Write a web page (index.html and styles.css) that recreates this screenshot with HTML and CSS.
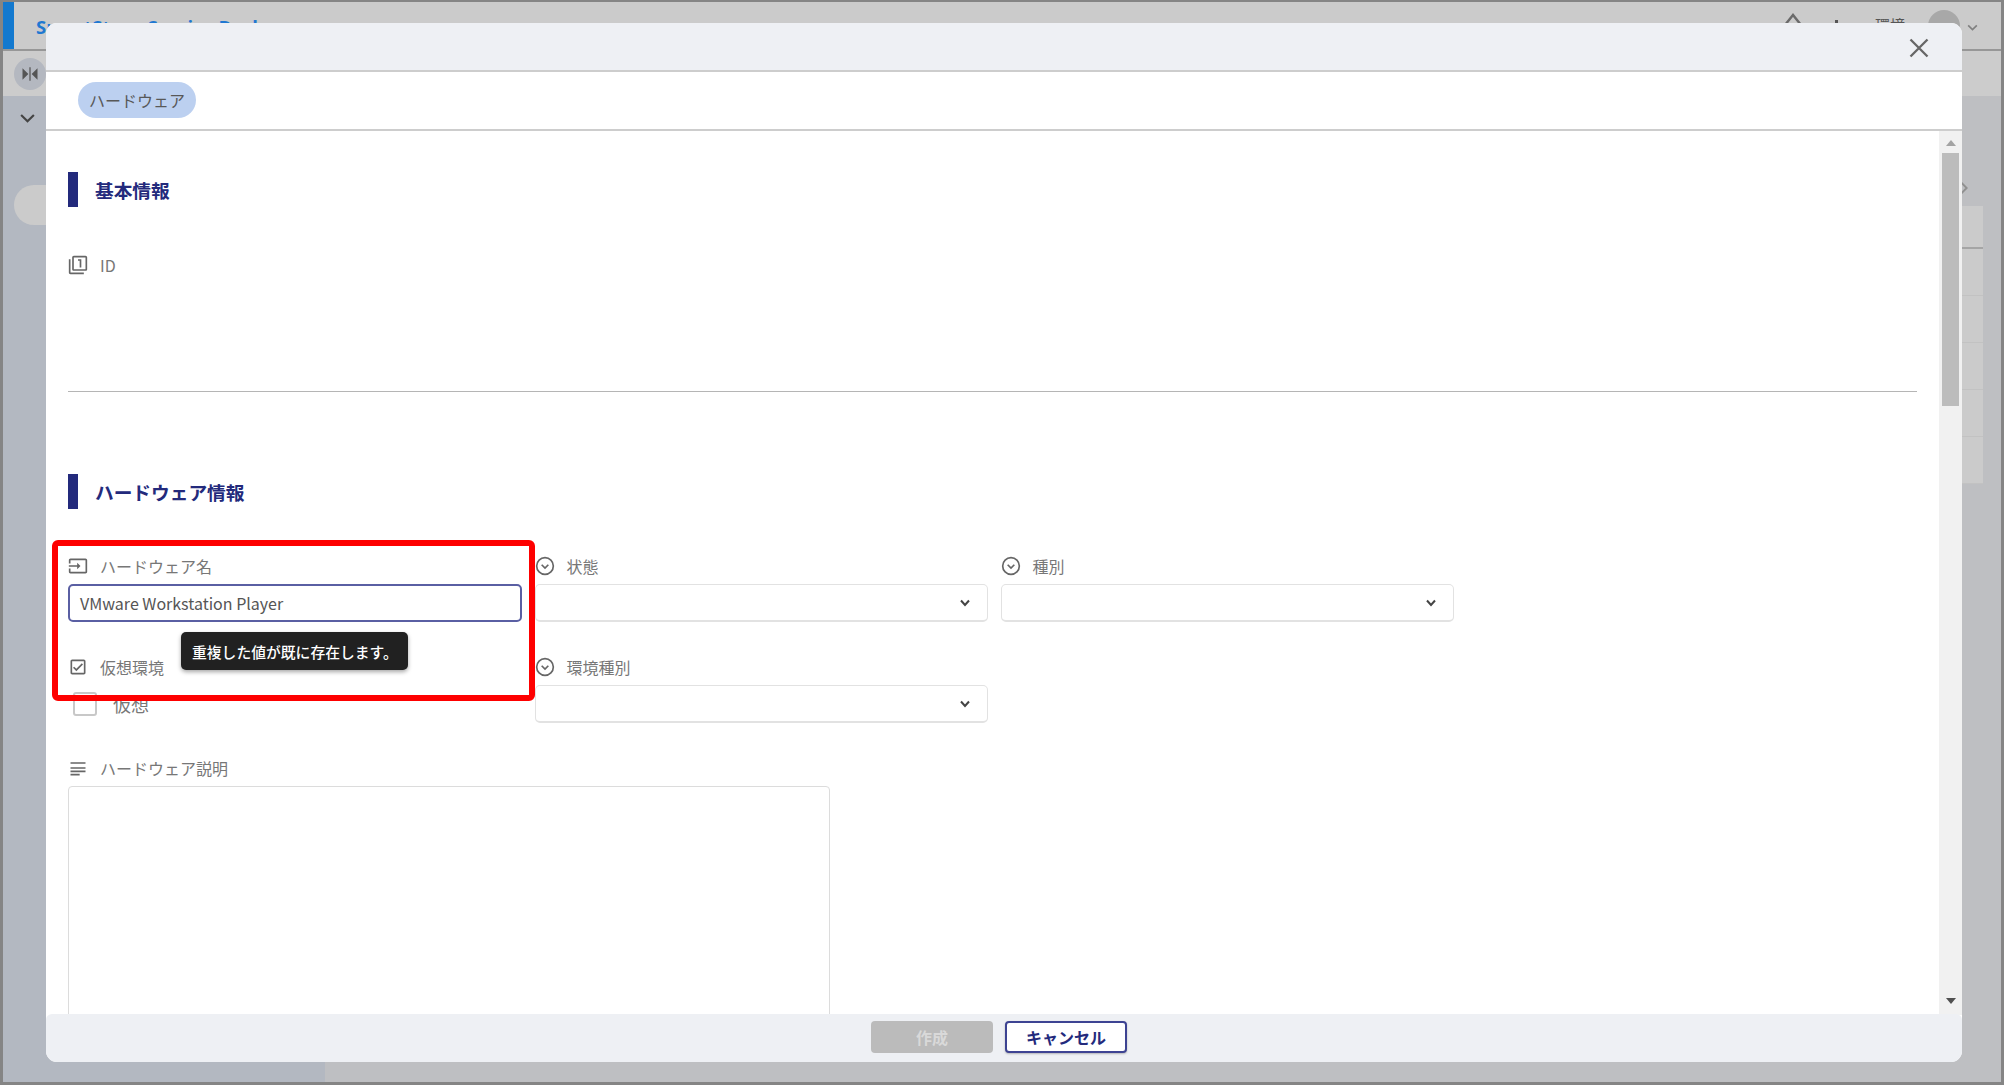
FILE: index.html
```html
<!DOCTYPE html>
<html lang="ja">
<head>
<meta charset="utf-8">
<title>ハードウェア</title>
<link rel="stylesheet" href="styles.css">
</head>
<body>
<div class="app">
  <header class="topbar">
    <div class="brand-mark"></div>
    <div class="brand">SmartStage Service Desk</div>
    <div class="top-actions">
      <svg class="top-home" viewBox="0 0 24 24"><path d="M4 13 12 3l8 10v8H4z" fill="none" stroke="#6a6a6a" stroke-width="2.4"/></svg>
      <span class="top-dot"></span>
      <span class="top-env">環境</span>
      <span class="avatar"></span>
      <svg class="top-chev" viewBox="0 0 24 24"><path d="M4 8l8 8 8-8" fill="none" stroke="#808080" stroke-width="3"/></svg>
    </div>
  </header>
  <div class="subbar">
    <span class="collapse">
      <svg viewBox="0 0 24 24"><path d="M3 5l7 7-7 7zM21 5l-7 7 7 7z" fill="#555"/><path d="M12 4v16" stroke="#555" stroke-width="1.5"/></svg>
    </span>
  </div>
  <div class="workspace">
    <aside class="sidebar">
      <svg class="side-chev" viewBox="0 0 24 24"><path d="M3 7l9 9 9-9" fill="none" stroke="#444" stroke-width="3"/></svg>
      <div class="side-pill"></div>
    </aside>
    <main class="backdrop">
      <svg class="back-arrow" viewBox="0 0 12 20"><path d="M2 2l8 8-8 8" fill="none" stroke="#909090" stroke-width="3"/></svg>
      <div class="back-table">
        <div class="back-row back-head"></div>
        <div class="back-row"></div>
        <div class="back-row"></div>
        <div class="back-row"></div>
        <div class="back-row"></div>
        <div class="back-row"></div>
      </div>
    </main>
  </div>
</div>

<section class="modal">
  <div class="modal-head">
    <svg class="close" viewBox="0 0 20 20"><path d="M1.5 1.5l17 17M18.500 1.500l-17 17" stroke="#666" stroke-width="2.300" fill="none"/></svg>
  </div>
  <div class="modal-tabs"><span class="pill">ハードウェア</span></div>
  <div class="modal-body">
    <div class="content">
      <h2 class="section-title section-first">基本情報</h2>
      <div class="label label-id">
        <svg class="ico" viewBox="0 0 24 24"><path d="M3 5H1v16c0 1.100.9 2 2 2h16v-2H3V5zm11 10h2V5h-4v2h2v8zm7-14H7c-1.100 0-2 .9-2 2v14c0 1.100.9 2 2 2h14c1.100 0 2-.9 2-2V3c0-1.100-.9-2-2-2zm0 16H7V3h14v14z"/></svg>
        <span>ID</span>
      </div>
      <hr class="divider">
      <h2 class="section-title">ハードウェア情報</h2>
      <div class="fields">
        <div class="field">
          <div class="label">
            <svg class="ico" viewBox="0 0 24 24"><path d="M21 3.010H3c-1.100 0-2 .9-2 2V9h2V4.990h18v14.030H3V15H1v4.010c0 1.100.9 1.980 2 1.980h18c1.100 0 2-.88 2-1.980v-14c0-1.110-.9-2-2-2zM11 16l4-4-4-4v3H1v2h10v3z"/></svg>
            <span>ハードウェア名</span>
          </div>
          <div class="input">VMware Workstation Player</div>
        </div>
        <div class="field">
          <div class="label">
            <svg class="ico" viewBox="0 0 24 24"><circle cx="12" cy="12" r="10" fill="none" stroke="#666" stroke-width="2"/><path d="M8 10.500l4 4 4-4" fill="none" stroke="#666" stroke-width="2"/></svg>
            <span>状態</span>
          </div>
          <div class="select"><svg class="sel-chev" viewBox="0 0 12 12"><path d="M2 3.500l4 4.500 4-4.500" fill="none" stroke="#444" stroke-width="2"/></svg></div>
        </div>
        <div class="field">
          <div class="label">
            <svg class="ico" viewBox="0 0 24 24"><circle cx="12" cy="12" r="10" fill="none" stroke="#666" stroke-width="2"/><path d="M8 10.500l4 4 4-4" fill="none" stroke="#666" stroke-width="2"/></svg>
            <span>種別</span>
          </div>
          <div class="select"><svg class="sel-chev" viewBox="0 0 12 12"><path d="M2 3.500l4 4.500 4-4.500" fill="none" stroke="#444" stroke-width="2"/></svg></div>
        </div>
        <div class="field">
          <div class="label">
            <svg class="ico" viewBox="0 0 24 24"><path d="M19 5v14H5V5h14m0-2H5c-1.100 0-2 .9-2 2v14c0 1.100.9 2 2 2h14c1.100 0 2-.9 2-2V5c0-1.100-.9-2-2-2z"/><path d="M10 17l-4-4 1.410-1.410L10 14.170l6.590-6.590L18 9l-8 8z"/></svg>
            <span>仮想環境</span>
          </div>
          <label class="check"><span class="box"></span><span>仮想</span></label>
        </div>
        <div class="field">
          <div class="label">
            <svg class="ico" viewBox="0 0 24 24"><circle cx="12" cy="12" r="10" fill="none" stroke="#666" stroke-width="2"/><path d="M8 10.500l4 4 4-4" fill="none" stroke="#666" stroke-width="2"/></svg>
            <span>環境種別</span>
          </div>
          <div class="select"><svg class="sel-chev" viewBox="0 0 12 12"><path d="M2 3.500l4 4.500 4-4.500" fill="none" stroke="#444" stroke-width="2"/></svg></div>
        </div>
      </div>
      <div class="field field-desc">
        <div class="label">
          <svg class="ico" viewBox="0 0 24 24"><path d="M14 19H3v2h11v-2zm7-8H3v2h18v-2zM3 17h18v-2H3v2zM3 5v2h18V5H3z"/></svg>
          <span>ハードウェア説明</span>
        </div>
        <div class="textarea"></div>
      </div>
    </div>
    <div class="scrollbar">
      <svg class="sb-up" viewBox="0 0 10 6"><path d="M5 0l5 6H0z" fill="#a3a3a3"/></svg>
      <div class="sb-thumb"></div>
      <svg class="sb-down" viewBox="0 0 10 6"><path d="M0 0h10L5 6z" fill="#505050"/></svg>
    </div>
  </div>
  <div class="modal-foot">
    <button class="btn btn-off">作成</button>
    <button class="btn btn-line">キャンセル</button>
  </div>
</section>

<div class="tooltip">重複した値が既に存在します。</div>
<div class="callout"></div>
</body>
</html>
```

FILE: styles.css
```css
* { box-sizing: border-box; }
html, body { margin: 0; padding: 0; height: 100%; overflow: hidden; }
body {
  font-family: "Noto Sans CJK JP", "Noto Sans", sans-serif;
  background: #bebfc2;
  color: #666;
}
.app {
  width: 2004px;
  height: 1085px;
  display: flex;
  flex-direction: column;
  border: 3px solid #858585;
  border-top-width: 2px;
}

/* dimmed page behind the dialog */
.topbar {
  height: 49px;
  flex: none;
  background: #cbcbcb;
  border-bottom: 2px solid #979797;
  display: flex;
  align-items: flex-start;
}
.brand-mark { width: 11px; height: 47px; background: #1379cf; }
.brand {
  margin-left: 22px;
  margin-top: 12px;
  font: 700 18.500px/26px "Open Sans", sans-serif;
  color: #1f78d1;
}
.top-actions { margin-left: auto; display: flex; align-items: flex-start; }
.top-home { width: 24px; height: 24px; margin-top: 10px; }
.top-dot { width: 3px; height: 14px; background: #555; margin: 18px 0 0 30px; }
.top-env { font-size: 15px; line-height: 20px; color: #555; margin: 13px 0 0 37px; }
.avatar { width: 32px; height: 32px; border-radius: 50%; background: #a8a8a8; margin: 8px 0 0 23px; }
.top-chev { width: 13px; height: 13px; margin: 19px 22px 0 6px; }

.subbar { height: 45px; flex: none; background: #cccccc; padding: 7px 0 0 11px; }
.collapse {
  width: 32px; height: 32px; border-radius: 50%;
  background: #b4b8c0;
  display: flex; align-items: center; justify-content: center;
}
.collapse svg { width: 20px; height: 20px; }

.workspace { flex: 1; display: flex; min-height: 0; }
.sidebar { width: 322px; flex: none; background: #b3b8c1; padding: 14px 0 0 16px; }
.side-chev { display: block; width: 17px; height: 17px; }
.side-pill { width: 200px; height: 40px; border-radius: 20px; background: #cbcbcb; margin: 58px 0 0 -5px; }
.backdrop { flex: 1; background: #bebfc2; padding: 85px 18px 0 0; display: flex; flex-direction: column; align-items: flex-end; }
.back-arrow { width: 8px; height: 14px; margin: 0 15px 11px 0; }
.back-table { width: 21px; }
.back-row { height: 47px; background: #cbcbcb; border-bottom: 1px solid #c2c2c2; }
.back-head { height: 43px; border-bottom: 2px solid #a5a5a5; }

/* dialog */
.modal {
  position: absolute;
  left: 46px;
  top: 23px;
  width: 1916px;
  height: 1039px;
  display: flex;
  flex-direction: column;
  background: #fff;
  border-radius: 11px;
  overflow: hidden;
}
.modal-head {
  height: 49px;
  flex: none;
  background: #eef0f4;
  border-bottom: 2px solid #cdcdcd;
  display: flex;
  justify-content: flex-end;
  align-items: center;
  padding: 0 33px 0 0;
}
.close { width: 20px; height: 20px; margin-top: 2px; }
.modal-tabs {
  height: 59px;
  flex: none;
  border-bottom: 2px solid #cdcdcd;
  padding: 10px 0 0 32px;
}
.pill {
  display: block;
  width: 118px;
  height: 36px;
  text-align: center;
  border-radius: 18px;
  background: #bcd0f0;
  font-size: 16px;
  line-height: 37px;
  color: #585858;
}
.modal-body { flex: 1; display: flex; min-height: 0; }
.content { flex: 1; padding: 0 22px; overflow: hidden; }
.section-title {
  margin: 82px 0 0;
  height: 35px;
  border-left: 10px solid #232a7c;
  padding-left: 17px;
  font-size: 18.700px;
  font-weight: 700;
  line-height: 35px;
  color: #232a7c;
}
.section-first { margin-top: 41px; }
.label {
  display: flex;
  align-items: center;
  gap: 12px;
  height: 24px;
  font-size: 16px;
  line-height: 24px;
  color: #777;
}
.label-id { margin-top: 46px; }
.ico { width: 20px; height: 20px; fill: #666; flex: none; }
.divider { margin: 114px 0 0; border: 0; border-top: 1px solid #b5b5b5; }
.fields {
  display: grid;
  grid-template-columns: 453.500px 453px 453px;
  column-gap: 13px;
  row-gap: 33px;
  margin-top: 45px;
}
.field .label { margin-bottom: 6px; }
.input {
  height: 38px;
  border: 2px solid #5a5fa3;
  border-radius: 5px;
  padding: 0 10px;
  font-size: 16px;
  line-height: 34px;
  color: #555;
}
.select {
  height: 38px;
  border: 1px solid #e2e2e2;
  border-bottom-width: 2px;
  border-radius: 5px;
  display: flex;
  align-items: center;
  justify-content: flex-end;
  padding-right: 16px;
}
.sel-chev { width: 12px; height: 12px; }
.check {
  display: flex;
  align-items: center;
  gap: 16px;
  padding-left: 5px;
  margin-top: 13px;
  font-size: 18px;
  line-height: 24px;
  color: #777;
}
.box { width: 24px; height: 24px; border: 2px solid #c8c8c8; border-radius: 3px; }
.field-desc { margin-top: 33px; }
.textarea { width: 762px; height: 400px; border: 1px solid #dcdcdc; border-radius: 4px; }

.scrollbar {
  width: 23px;
  flex: none;
  background: #f1f1f1;
  padding: 0 3px;
  display: flex;
  flex-direction: column;
  align-items: center;
}
.sb-up { width: 10px; height: 6px; flex: none; margin-top: 9px; }
.sb-thumb { width: 17px; height: 253px; flex: none; margin-top: 7px; background: #bcbcbc; }
.sb-down { width: 10px; height: 6px; flex: none; margin-top: auto; margin-bottom: 11px; }

.modal-foot {
  height: 48px;
  flex: none;
  background: #eef0f4;
  border-radius: 6px 6px 0 0;
  margin-top: -1px;
  position: relative;
  display: flex;
  justify-content: center;
  gap: 12px;
  padding: 7px 10px 0 0;
}
.btn {
  width: 122px;
  height: 32px;
  border-radius: 4px;
  font-family: inherit;
  font-size: 16px;
  font-weight: 700;
  padding: 0;
}
.btn-off { background: #bbbbbb; border: 0; color: #d9d9d9; }
.btn-line { background: #fff; border: 2px solid #3d4392; color: #232a7c; box-shadow: 0 1px 2px rgba(0,0,0,.25); }

/* annotations over the dialog */
.tooltip {
  position: absolute;
  left: 181px;
  top: 632px;
  width: 227px;
  height: 38px;
  border-radius: 5px;
  background: #212121;
  color: #fff;
  font-size: 14.800px;
  font-weight: 500;
  line-height: 39px;
  padding-left: 11px;
  box-shadow: 0 2px 4px rgba(0,0,0,.35);
}
.callout {
  position: absolute;
  left: 52px;
  top: 540px;
  width: 483px;
  height: 161px;
  border: 6px solid #fe0000;
  border-radius: 6px;
  pointer-events: none;
}
```
